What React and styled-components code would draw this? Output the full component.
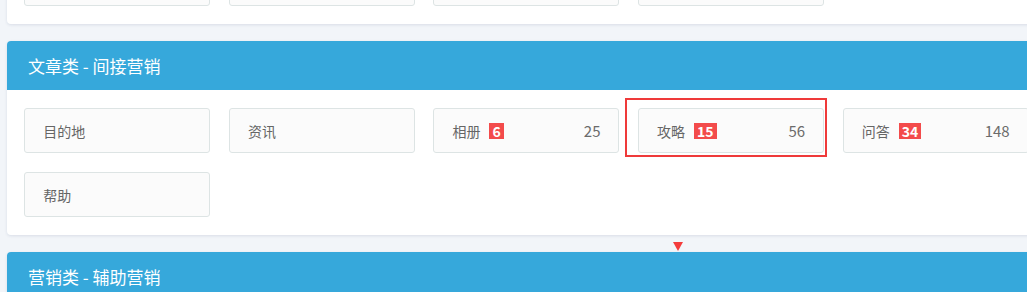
import React from "react";
import styled, { createGlobalStyle } from "styled-components";

const GlobalStyle = createGlobalStyle`
  html, body {
    margin: 0;
    padding: 0;
    overflow: hidden;
    background: #f2f5f9;
    font-family: "Noto Sans CJK SC", "Noto Sans", sans-serif;
  }
`;

// the upper card is scrolled mostly out of view, only its tile bottoms show
const topTiles = [1, 2, 3, 4];

const articleTiles = [
  { label: "目的地" },
  { label: "资讯" },
  { label: "相册", badge: 6, count: 25 },
  { label: "攻略", badge: 15, count: 56, highlighted: true },
  { label: "问答", badge: 34, count: 148 },
  { label: "帮助" },
];

const App = () => {
  return (
    <>
      <GlobalStyle />
      <Page>
        <Panel $first>
          <TileGrid>
            {topTiles.map((id) => (
              <Tile key={id} />
            ))}
          </TileGrid>
        </Panel>

        <Panel>
          <PanelHeader>文章类 - 间接营销</PanelHeader>
          <TileGrid>
            {articleTiles.map((t) => (
              <Tile key={t.label} $highlighted={t.highlighted}>
                <Label>
                  {t.label}
                  {t.badge != null && <Badge>{t.badge}</Badge>}
                </Label>
                {t.count != null && <Count>{t.count}</Count>}
              </Tile>
            ))}
          </TileGrid>
        </Panel>

        <Panel>
          <Marker />
          <PanelHeader>营销类 - 辅助营销</PanelHeader>
          <TileGrid>
            <Tile />
          </TileGrid>
        </Panel>
      </Page>
    </>
  );
};

const Page = styled.div`
  width: 1060px;
  padding: 0 0 0 7px;
  display: flex;
  flex-direction: column;
  gap: 17px;
`;

const Panel = styled.section`
  position: relative;
  background: #fff;
  border-radius: 4px;
  box-shadow: 0 1px 3px rgba(40, 60, 110, 0.12);
  margin-top: ${(p) => (p.$first ? "-57px" : "0")};
`;

const PanelHeader = styled.div`
  height: 49px;
  display: flex;
  align-items: center;
  padding-left: 21px;
  background: #36a8db;
  color: #fff;
  font-size: 17px;
  border-radius: 4px 4px 0 0;
`;

const TileGrid = styled.div`
  display: grid;
  grid-template-columns: repeat(5, 186px);
  column-gap: 18.6px;
  row-gap: 19px;
  padding: 18px 17px 18px 17.3px;
`;

const Tile = styled.div`
  position: relative;
  box-sizing: border-box;
  height: 45px;
  display: flex;
  align-items: center;
  justify-content: space-between;
  padding: 0 18px 0 18px;
  background: #fbfbfb;
  border: 1px solid #dde4e4;
  border-radius: 3px;
  color: #666;
  font-size: 14px;

  &::after {
    content: "";
    display: ${(p) => (p.$highlighted ? "block" : "none")};
    position: absolute;
    left: -14.5px;
    top: -11.5px;
    width: 202px;
    height: 59px;
    box-sizing: border-box;
    border: 2px solid #ef3a3a;
    pointer-events: none;
  }
`;

const Label = styled.span`
  display: flex;
  align-items: center;
`;

const Badge = styled.span`
  margin-left: 9px;
  height: 16px;
  line-height: 16px;
  padding: 0 3px;
  background: #f34b4b;
  color: #fff;
  font-size: 14px;
  font-weight: bold;
`;

const Count = styled.span`
  font-size: 15px;
  color: #6b6b6b;
`;

const Marker = styled.span`
  position: absolute;
  left: 666px;
  top: -10px;
  width: 0;
  height: 0;
  border-left: 5.5px solid transparent;
  border-right: 5.5px solid transparent;
  border-top: 9px solid #f43c3c;
`;

export default App;
